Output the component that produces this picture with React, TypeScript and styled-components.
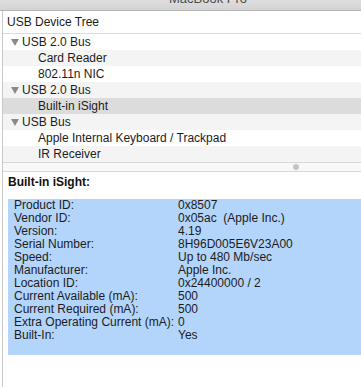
import React from "react";
import styled, { createGlobalStyle } from "styled-components";

const GlobalStyle = createGlobalStyle`
  body {
    margin: 0;
    background: #ffffff;
    font-family: "Liberation Sans", Arial, sans-serif;
  }
`;

type TreeItem = { label: string; level: 0 | 1; selected?: boolean };

const tree: TreeItem[] = [
  { label: "USB 2.0 Bus", level: 0 },
  { label: "Card Reader", level: 1 },
  { label: "802.11n NIC", level: 1 },
  { label: "USB 2.0 Bus", level: 0 },
  { label: "Built-in iSight", level: 1, selected: true },
  { label: "USB Bus", level: 0 },
  { label: "Apple Internal Keyboard / Trackpad", level: 1 },
  { label: "IR Receiver", level: 1 },
];

const details: [string, string][] = [
  ["Product ID:", "0x8507"],
  ["Vendor ID:", "0x05ac  (Apple Inc.)"],
  ["Version:", "4.19"],
  ["Serial Number:", "8H96D005E6V23A00"],
  ["Speed:", "Up to 480 Mb/sec"],
  ["Manufacturer:", "Apple Inc."],
  ["Location ID:", "0x24400000 / 2"],
  ["Current Available (mA):", "500"],
  ["Current Required (mA):", "500"],
  ["Extra Operating Current (mA):", "0"],
  ["Built-In:", "Yes"],
];

const App = () => {
  return (
    <>
      <GlobalStyle />
      <Window>
        <TitleBar>
          <Title>MacBook Pro</Title>
        </TitleBar>
        <Body>
          <Header>USB Device Tree</Header>
          <TreeList>
            {tree.map((item, i) => (
              <TreeRow key={i} striped={i % 2 === 1} selected={!!item.selected}>
                {item.level === 0 && <Disclosure />}
                <TreeLabel level={item.level}>{item.label}</TreeLabel>
              </TreeRow>
            ))}
          </TreeList>
          <Splitter>
            <Knob />
          </Splitter>
          <Details>
            <DetailsTitle>Built-in iSight:</DetailsTitle>
            <InfoBox>
              {details.map(([k, v]) => (
                <InfoRow key={k}>
                  <InfoKey>{k}</InfoKey>
                  <InfoValue>{v}</InfoValue>
                </InfoRow>
              ))}
            </InfoBox>
          </Details>
        </Body>
      </Window>
    </>
  );
};

const Window = styled.div`
  display: flex;
  flex-direction: column;
  width: 361px;
  height: 387px;
  overflow: hidden;
  color: #1c1c1c;
  font-size: 12px;
`;

const TitleBar = styled.div`
  flex: none;
  display: flex;
  height: 10px;
  padding-left: 169px;
  overflow: hidden;
  background: linear-gradient(#dedede, #d3d3d3);
  border-bottom: 1px solid #b5b5b5;
`;

const Title = styled.span`
  margin-top: -9px;
  line-height: 16px;
  font-size: 13px;
  color: #4a4a4a;
  white-space: nowrap;
`;

const Body = styled.div`
  flex: 1;
  display: flex;
  flex-direction: column;
  margin-left: 2px;
  border-left: 1px solid #c9c9c9;
`;

const Header = styled.div`
  height: 22px;
  padding-left: 4px;
  line-height: 22px;
  border-bottom: 1px solid #dadada;
`;

const TreeList = styled.div`
  display: flex;
  flex-direction: column;
`;

const TreeRow = styled.div<{ striped: boolean; selected: boolean }>`
  display: flex;
  align-items: center;
  height: 16px;
  padding-left: 8px;
  white-space: nowrap;
  background: ${({ striped, selected }) =>
    selected ? "#dcdcdc" : striped ? "#f4f4f4" : "#ffffff"};
`;

const Disclosure = styled.span`
  width: 0;
  height: 0;
  margin-right: 3px;
  border-left: 4px solid transparent;
  border-right: 4px solid transparent;
  border-top: 7px solid #8a8a8a;
`;

const TreeLabel = styled.span<{ level: 0 | 1 }>`
  margin-left: ${({ level }) => (level === 0 ? "0" : "27px")};
  line-height: 16px;
`;

const Splitter = styled.div`
  display: flex;
  align-items: center;
  height: 8px;
  padding-left: 290px;
  background: #f8f8f8;
  border-top: 1px solid #d8d8d8;
  border-bottom: 1px solid #d8d8d8;
`;

const Knob = styled.span`
  width: 6px;
  height: 6px;
  border-radius: 50%;
  background: #c4c4c4;
`;

const Details = styled.div`
  display: flex;
  flex-direction: column;
  padding: 4px 0 0 5px;
`;

const DetailsTitle = styled.div`
  height: 23px;
  line-height: 13px;
  font-weight: bold;
  color: #111111;
`;

const InfoBox = styled.div`
  display: flex;
  flex-direction: column;
  padding: 0 0 13px 6px;
  background: #b3d5fb;
`;

const InfoRow = styled.div`
  display: flex;
  height: 13px;
  line-height: 13px;
  white-space: pre;
`;

const InfoKey = styled.span`
  width: 164px;
`;

const InfoValue = styled.span``;

export default App;
